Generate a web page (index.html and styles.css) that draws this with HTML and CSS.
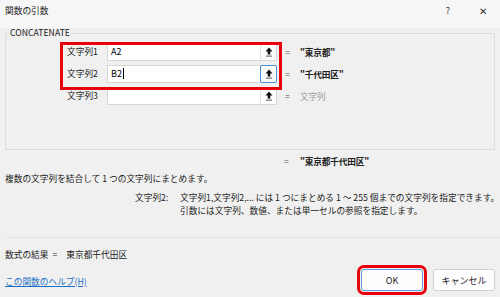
FILE: index.html
```html
<!DOCTYPE html>
<html lang="ja">

<head>
  <meta charset="UTF-8">
  <title>関数の引数</title>
  <link rel="stylesheet" href="styles.css">
</head>

<body>
  <div class="dialog">
    <div class="titlebar">
      <p class="title">関数の引数</p>
      <span class="help-btn">?</span>
      <span class="close-btn">✕</span>
    </div>

    <fieldset class="group">
      <legend>CONCATENATE</legend>
      <div class="mark"></div>
      <div class="rows">
        <div class="row">
          <label>文字列1</label>
          <div class="field"><span class="val">A2</span><span class="pick"><svg width="8" height="10" viewBox="0 0 8 10"><path d="M4 0.5 L7.5 4.5 L5.3 4.5 L5.3 7.5 L2.7 7.5 L2.7 4.5 L0.5 4.5 Z" fill="#111"/><rect x="1" y="8.6" width="6" height="1" fill="#555"/></svg></span></div>
          <span class="eq">=</span>
          <span class="res">"東京都"</span>
        </div>
        <div class="row">
          <label>文字列2</label>
          <div class="field"><span class="val">B2<i class="caret"></i></span><span class="pick on"><svg width="8" height="10" viewBox="0 0 8 10"><path d="M4 0.5 L7.5 4.5 L5.3 4.5 L5.3 7.5 L2.7 7.5 L2.7 4.5 L0.5 4.5 Z" fill="#111"/><rect x="1" y="8.6" width="6" height="1" fill="#555"/></svg></span></div>
          <span class="eq">=</span>
          <span class="res">"千代田区"</span>
        </div>
        <div class="row">
          <label>文字列3</label>
          <div class="field"><span class="val"></span><span class="pick"><svg width="8" height="10" viewBox="0 0 8 10"><path d="M4 0.5 L7.5 4.5 L5.3 4.5 L5.3 7.5 L2.7 7.5 L2.7 4.5 L0.5 4.5 Z" fill="#111"/><rect x="1" y="8.6" width="6" height="1" fill="#555"/></svg></span></div>
          <span class="eq">=</span>
          <span class="res hint">文字列</span>
        </div>
      </div>
    </fieldset>

    <div class="total"><span class="eq">=</span><span class="res">"東京都千代田区"</span></div>

    <p class="summary">複数の文字列を結合して 1 つの文字列にまとめます。</p>

    <div class="argdesc">
      <span class="argname">文字列2:</span>
      <div class="argtext">
        <p>文字列1,文字列2,... には 1 つにまとめる 1 ～ 255 個までの文字列を指定できます。</p>
        <p>引数には文字列、数値、または単一セルの参照を指定します。</p>
      </div>
    </div>

    <div class="result"><span>数式の結果</span><span class="result-eq">=</span><span>東京都千代田区</span></div>

    <div class="footer">
      <a class="helplink" href="#">この関数のヘルプ(H)</a>
      <div class="buttons">
        <button class="btn ok">OK</button>
        <button class="btn">キャンセル</button>
      </div>
    </div>
  </div>
</body>

</html>
```

FILE: styles.css
```css
*{
    margin: 0;
    padding: 0;
    box-sizing: border-box;
  }
  body{
    font-family: "Noto Sans CJK JP", "Noto Sans", sans-serif;
    font-size: 8.7px;
    color: #1a1a1a;
    background: #f0f0f0;
  }
  .dialog{
    width: 500px;
    height: 297px;
    background: #f0f0f0;
    overflow: hidden;
  }
  .titlebar{
    height: 28px;
    background: #f6f6f6;
    display: flex;
    align-items: flex-start;
    padding: 5px 0 0 5px;
  }
  .title{
    flex: 1;
    line-height: 12px;
  }
  .help-btn{
    width: 36px;
    text-align: center;
    line-height: 12px;
    font-size: 9px;
    color: #333;
  }
  .close-btn{
    width: 34px;
    text-align: center;
    line-height: 12px;
    font-size: 10px;
    color: #333;
  }
  .group{
    position: relative;
    margin: 0 5px;
    height: 122px;
    border: 1px solid #dcdcdc;
  }
  .group legend{
    margin-left: 3px;
    padding: 0 1px;
    line-height: 10px;
  }
  .mark{
    position: absolute;
    left: 54px;
    top: 4px;
    width: 222px;
    height: 48px;
    border: 3px solid #e8000b;
  }
  .rows{
    padding: 5px 0 0 61px;
  }
  .row{
    display: grid;
    grid-template-columns: 40px 178px 15px auto;
    align-items: center;
    height: 18px;
    margin-bottom: 4px;
  }
  .row label{
    line-height: 18px;
  }
  .field{
    display: flex;
    height: 18px;
    background: #fff;
    border: 1px solid #d6d6d6;
    margin-right: 8px;
  }
  .field .val{
    flex: 1;
    padding-left: 3px;
    line-height: 16px;
    font-size: 9px;
    color: #000;
  }
  .caret{
    display: inline-block;
    width: 1px;
    height: 11px;
    background: #000;
    vertical-align: -2px;
    margin-left: 1px;
  }
  .pick{
    width: 16px;
    display: flex;
    align-items: center;
    justify-content: center;
    border-left: 1px solid #e2e2e2;
    background: #fdfdfd;
  }
  .pick.on{
    border: 1px solid #4a90d9;
    border-radius: 2px;
    margin: -1px -1px -1px 0;
    width: 17px;
  }
  .eq{
    color: #555;
    display: inline-block;
  }
  .res{
    color: #222;
    font-weight: bold;
    letter-spacing: -0.2px;
  }
  .res.hint{
    color: #9a9a9a;
    font-weight: normal;
  }
  .total{
    margin: 6px 0 0 284px;
    line-height: 12px;
  }
  .total .eq{
    width: 16px;
  }
  .summary{
    margin: 5px 0 0 5px;
    line-height: 12px;
  }
  .argdesc{
    display: flex;
    margin: 6px 0 0 135px;
    line-height: 13px;
  }
  .argname{
    width: 45px;
  }
  .result{
    display: flex;
    margin: 20px 0 0 5px;
    padding-top: 11px;
    border-top: 1px solid #e2e2e2;
    line-height: 12px;
  }
  .result-eq{
    margin: 0 9px 0 4px;
  }
  .footer{
    display: flex;
    align-items: center;
    justify-content: space-between;
    padding: 0 5px;
    margin-top: 8px;
  }
  .helplink{
    color: #1a6fc6;
    text-decoration: underline;
    margin-top: 3px;
  }
  .buttons{
    display: flex;
    gap: 10px;
  }
  .btn{
    width: 62px;
    height: 22px;
    font-family: inherit;
    font-size: 9px;
    color: #1a1a1a;
    background: #fdfdfd;
    border: 1px solid #d0d0d0;
    border-radius: 3px;
  }
  .btn.ok{
    border-color: #5a9ad6;
    outline: 3px solid #e8000b;
    outline-offset: 1px;
  }
```
